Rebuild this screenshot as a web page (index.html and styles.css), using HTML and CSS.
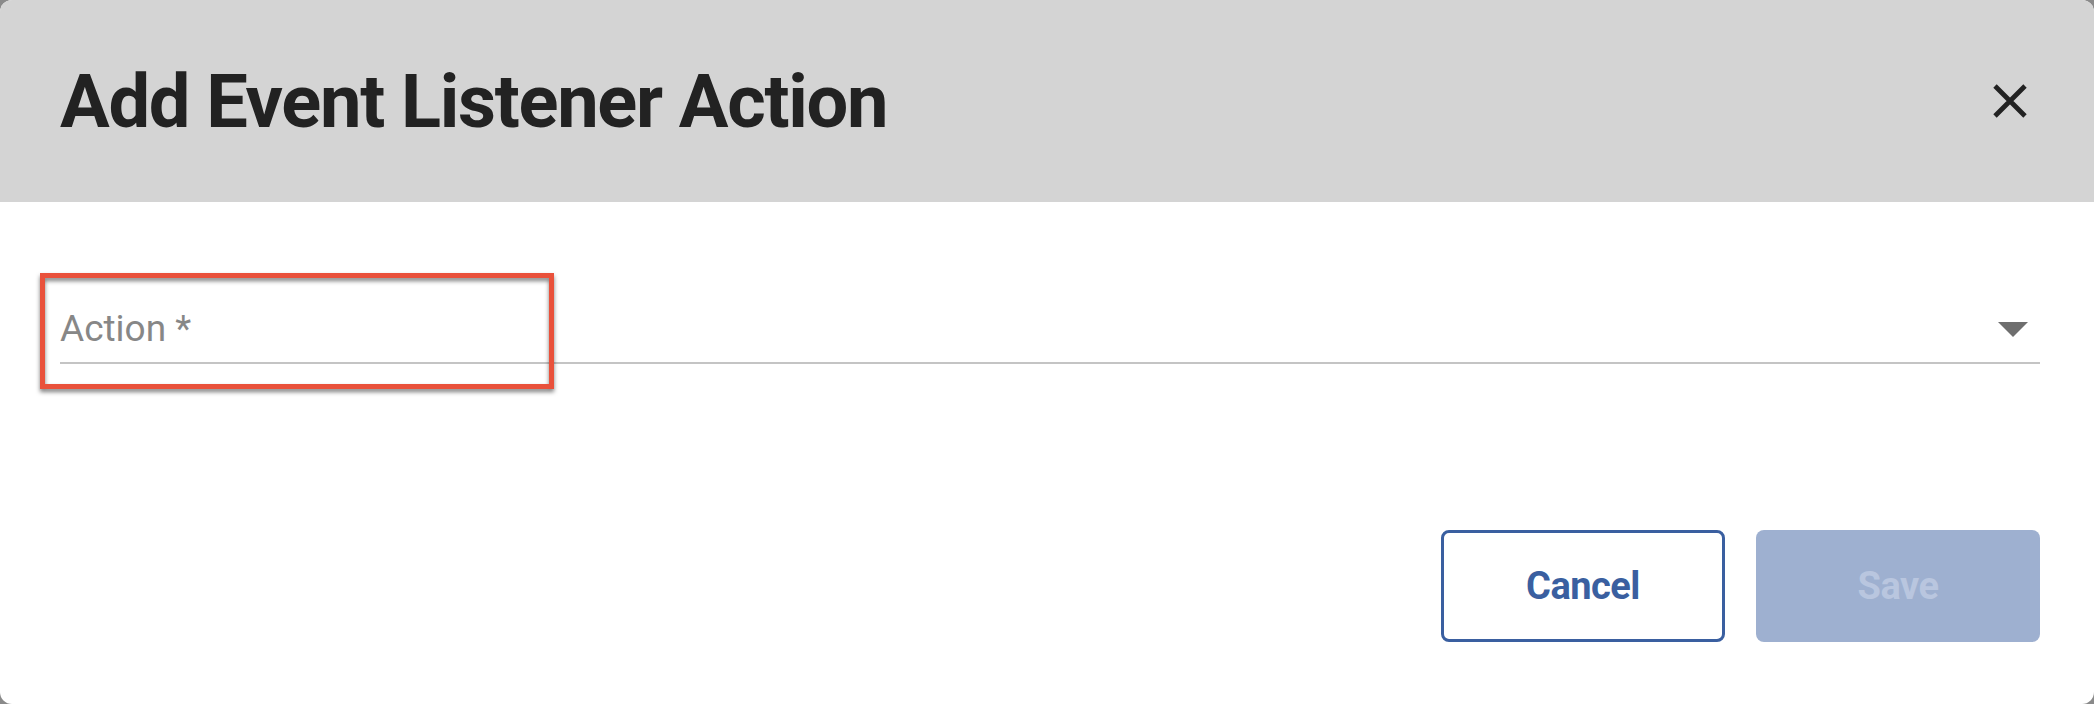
FILE: index.html
```html
<!DOCTYPE html>
<html lang="en">
<head>
    <meta charset="UTF-8">
    <meta name="viewport" content="width=device-width, initial-scale=1.0">
    <title>Add Event Listener Action</title>
    <link rel="stylesheet" href="styles.css">
</head>
<body>
    <div class="dialog">
        <div class="dialog-header">
            <h1>Add Event Listener Action</h1>
            <button class="close" type="button" aria-label="Close">
                <svg width="34" height="34" viewBox="0 0 34 34">
                    <path d="M2 2 L32 32 M32 2 L2 32" stroke="#222" stroke-width="4.8" fill="none"/>
                </svg>
            </button>
        </div>
        <div class="dialog-body">
            <div class="field">
                <span class="field-label">Action *</span>
                <span class="caret"></span>
            </div>
            <div class="highlight"></div>
            <div class="actions">
                <button class="btn btn-outline" type="button">Cancel</button>
                <button class="btn btn-primary" type="button" disabled>Save</button>
            </div>
        </div>
    </div>
</body>
</html>
```

FILE: styles.css
```css
body {
    margin: 0;
    padding: 0;
    background-color: #8a8a8a;
    font-family: Roboto, "Liberation Sans", Arial, sans-serif;
}
.dialog {
    width: 2094px;
    height: 704px;
    background-color: #fff;
    border-radius: 12px;
    overflow: hidden;
}
.dialog-header {
    height: 202px;
    box-sizing: border-box;
    padding: 0 67px 0 60px;
    background-color: #d4d4d4;
    display: flex;
    align-items: center;
    justify-content: space-between;
}
h1 {
    margin: 0;
    font-size: 74px;
    font-weight: 700;
    color: #222;
    letter-spacing: -1.3px;
}
.close {
    padding: 0;
    border: none;
    background: none;
    display: flex;
    cursor: pointer;
}
.dialog-body {
    position: relative;
    padding: 105px 54px 0 60px;
}
.field {
    display: flex;
    align-items: center;
    justify-content: space-between;
    padding-bottom: 11px;
    border-bottom: 2px solid #c4c4c4;
}
.field-label {
    font-size: 37px;
    line-height: 44px;
    color: #878787;
}
.caret {
    width: 0;
    height: 0;
    margin-right: 12px;
    border-left: 15px solid transparent;
    border-right: 15px solid transparent;
    border-top: 15px solid #6e6e6e;
}
/* red outline drawn over the Action field */
.highlight {
    position: absolute;
    left: 40px;
    top: 71px;
    width: 514px;
    height: 116px;
    box-sizing: border-box;
    border: 5px solid #e9513b;
    filter: drop-shadow(0 3px 2px rgba(0, 0, 0, 0.5));
}
.actions {
    display: flex;
    justify-content: flex-end;
    gap: 31px;
    margin-top: 166px;
}
.btn {
    width: 284px;
    height: 112px;
    box-sizing: border-box;
    border-radius: 8px;
    font-family: Roboto, "Liberation Sans", Arial, sans-serif;
    font-size: 38px;
    font-weight: 700;
    letter-spacing: -0.5px;
    cursor: pointer;
}
.btn-outline {
    background-color: #fff;
    color: #3a5fa0;
    border: 3px solid #3a5fa0;
}
.btn-primary {
    background-color: #9eb0d0;
    color: #b9c6df;
    border: none;
    cursor: default;
}
```
